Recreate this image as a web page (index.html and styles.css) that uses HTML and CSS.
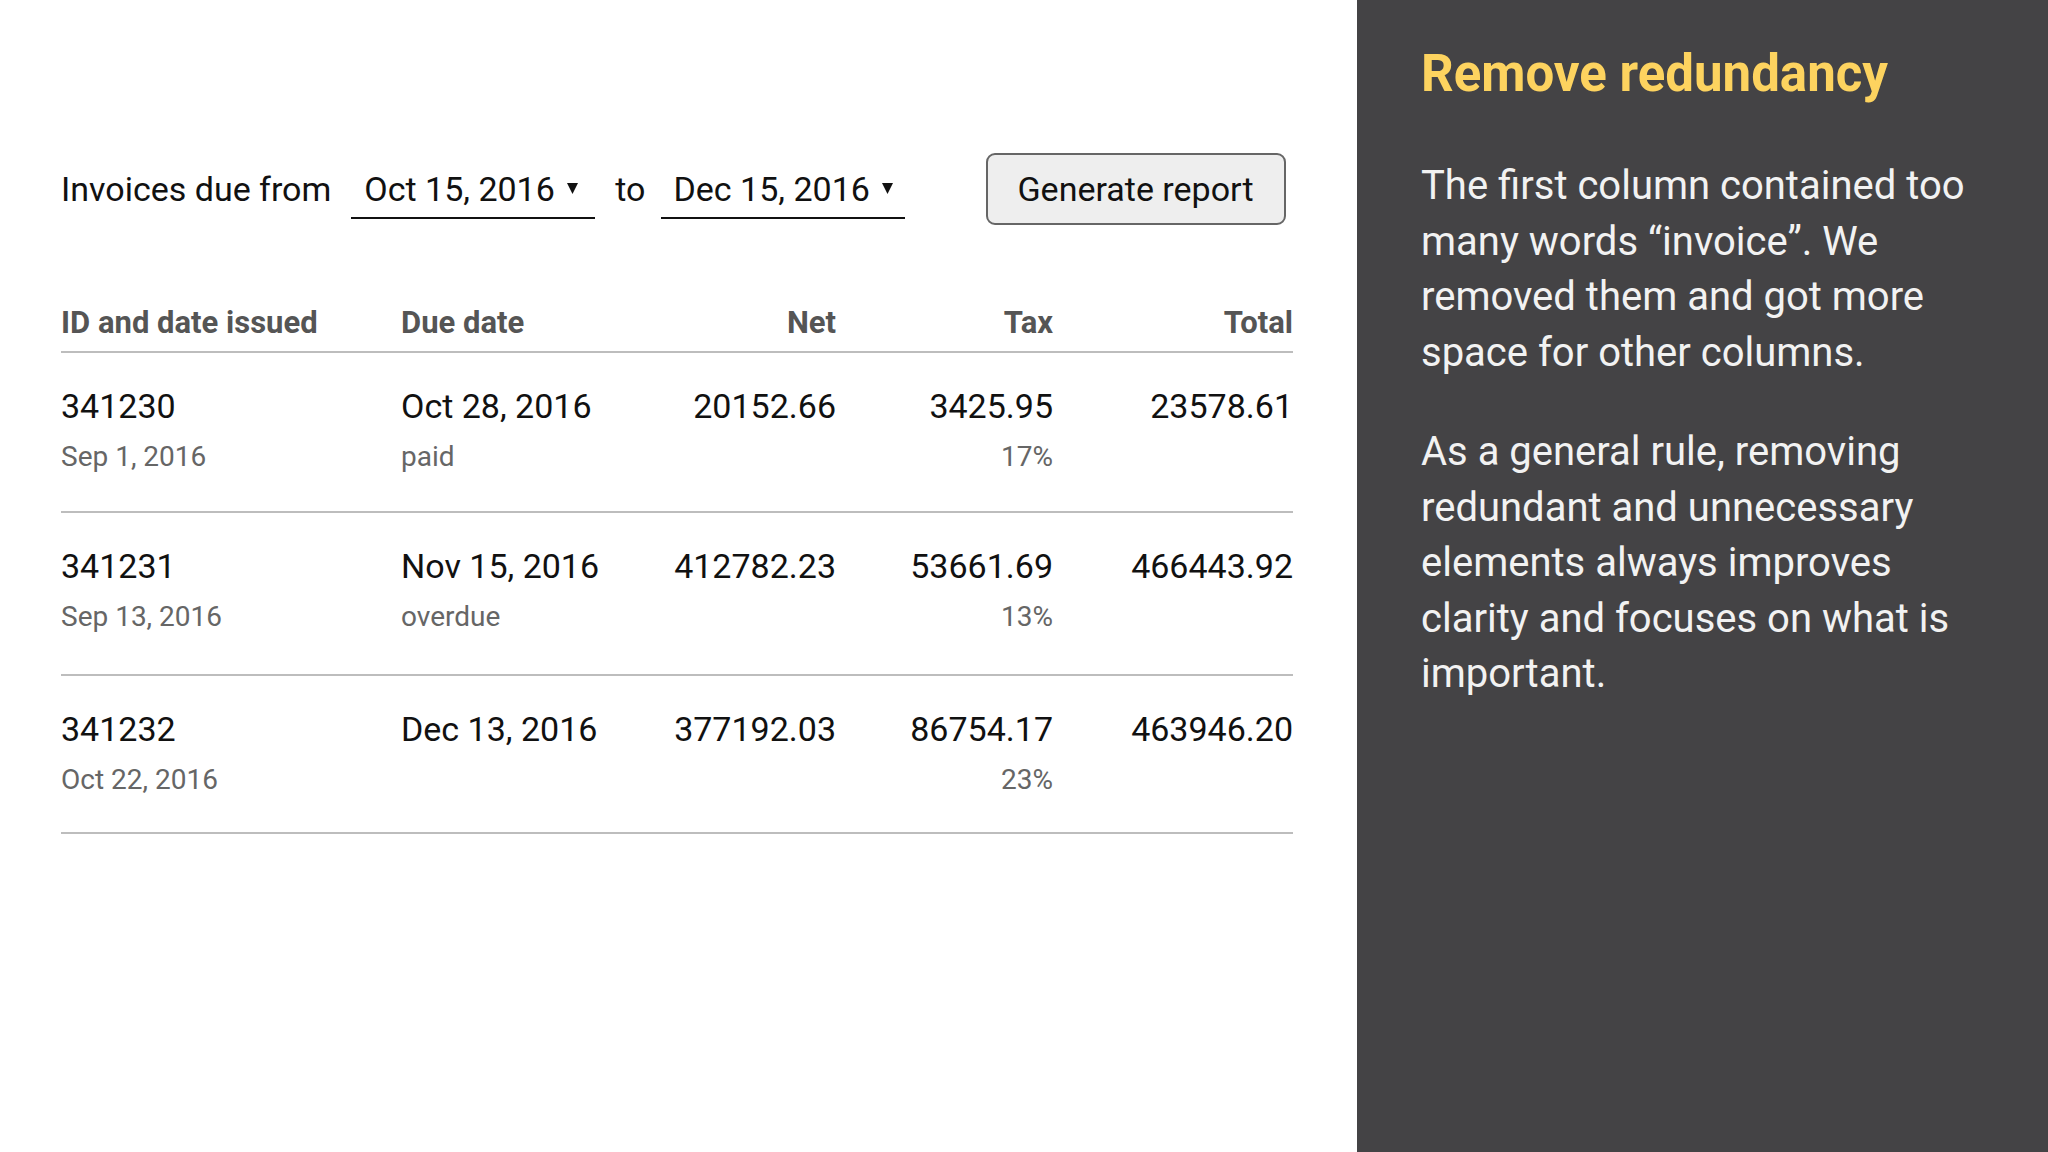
FILE: index.html
```html
<!DOCTYPE html>
<html lang="en">
<head>
<meta charset="utf-8">
<title>Invoices</title>
<link rel="stylesheet" href="styles.css">
</head>
<body>
<div class="page">
  <main class="main">
    <div class="toolbar">
      <span class="label">Invoices due from</span>
      <div class="picker"><span>Oct 15, 2016</span><svg class="caret" width="11" height="11" viewBox="0 0 11 11"><polygon points="0,0 11,0 5.5,11" fill="#111"/></svg></div>
      <span class="label to">to</span>
      <div class="picker"><span>Dec 15, 2016</span><svg class="caret" width="11" height="11" viewBox="0 0 11 11"><polygon points="0,0 11,0 5.5,11" fill="#111"/></svg></div>
      <button class="btn">Generate report</button>
    </div>

    <div class="table">
      <div class="row head">
        <div class="cell">ID and date issued</div>
        <div class="cell">Due date</div>
        <div class="cell num">Net</div>
        <div class="cell num">Tax</div>
        <div class="cell num">Total</div>
      </div>
      <div class="row r1">
        <div class="cell"><div class="main-t">341230</div><div class="sub">Sep 1, 2016</div></div>
        <div class="cell"><div class="main-t">Oct 28, 2016</div><div class="sub">paid</div></div>
        <div class="cell num"><div class="main-t">20152.66</div></div>
        <div class="cell num"><div class="main-t">3425.95</div><div class="sub">17%</div></div>
        <div class="cell num"><div class="main-t">23578.61</div></div>
      </div>
      <div class="row r2">
        <div class="cell"><div class="main-t">341231</div><div class="sub">Sep 13, 2016</div></div>
        <div class="cell"><div class="main-t">Nov 15, 2016</div><div class="sub">overdue</div></div>
        <div class="cell num"><div class="main-t">412782.23</div></div>
        <div class="cell num"><div class="main-t">53661.69</div><div class="sub">13%</div></div>
        <div class="cell num"><div class="main-t">466443.92</div></div>
      </div>
      <div class="row r3">
        <div class="cell"><div class="main-t">341232</div><div class="sub">Oct 22, 2016</div></div>
        <div class="cell"><div class="main-t">Dec 13, 2016</div></div>
        <div class="cell num"><div class="main-t">377192.03</div></div>
        <div class="cell num"><div class="main-t">86754.17</div><div class="sub">23%</div></div>
        <div class="cell num"><div class="main-t">463946.20</div></div>
      </div>
    </div>
  </main>

  <aside class="aside">
    <h1 class="title">Remove redundancy</h1>
    <p class="text">The first column contained too many words “invoice”. We removed them and got more space for other columns.</p>
    <p class="text">As a general rule, removing redundant and unnecessary elements always improves clarity and focuses on what is important.</p>
  </aside>
</div>
</body>
</html>
```

FILE: styles.css
```css
html, body {
  margin: 0;
  padding: 0;
}
body {
  font-family: Roboto, "Noto Sans", sans-serif;
  background: #fff;
  color: #111;
}
.page {
  display: flex;
  width: 2048px;
  height: 1152px;
  overflow: hidden;
}
.main {
  width: 1357px;
  flex: none;
  box-sizing: border-box;
  padding: 153px 0 0 61px;
}
.toolbar {
  display: flex;
  align-items: baseline;
  height: 72px;
  font-size: 34px;
}
.label {
  margin-right: 20px;
  line-height: 40px;
}
.label.to {
  margin-left: 20px;
  margin-right: 15px;
}
.picker {
  width: 244px;
  box-sizing: border-box;
  padding: 0 0 8px 13px;
  line-height: 40px;
  border-bottom: 2px solid #111;
}
.caret {
  display: inline-block;
  vertical-align: 7px;
  margin-left: 12px;
}
.btn {
  margin-left: 81px;
  width: 300px;
  height: 72px;
  padding: 0;
  font-family: Roboto, sans-serif;
  font-size: 34px;
  color: #111;
  background: #eeeeee;
  border: 2px solid #666;
  border-radius: 9px;
}
.table {
  margin-top: 76px;
  width: 1232px;
}
.row {
  display: grid;
  grid-template-columns: 340px 215px 220px 217px 240px;
  border-bottom: 2px solid #bdbdbd;
  box-sizing: border-box;
  padding-top: 32px;
}
.row.r1 { height: 160px; }
.row.r2 { height: 163px; }
.row.r3 { height: 158px; }
.row.head {
  height: 52px;
  padding-top: 3px;
  font-weight: 700;
  font-size: 31px;
  color: #555;
}
.num {
  text-align: right;
}
.main-t {
  font-size: 34px;
  line-height: 42px;
  color: #111;
}
.sub {
  font-size: 28px;
  line-height: 36px;
  margin-top: 12px;
  color: #666;
}
.aside {
  flex: 1;
  background: #444345;
  box-sizing: border-box;
  padding: 38px 40px 0 64px;
  color: #f2f2f2;
}
.title {
  margin: 0 0 48px;
  font-size: 51px;
  font-weight: 700;
  color: #fdd35f;
  line-height: 72px;
}
.text {
  margin: 0 0 44px;
  width: 580px;
  font-size: 40px;
  line-height: 55.5px;
}
```
